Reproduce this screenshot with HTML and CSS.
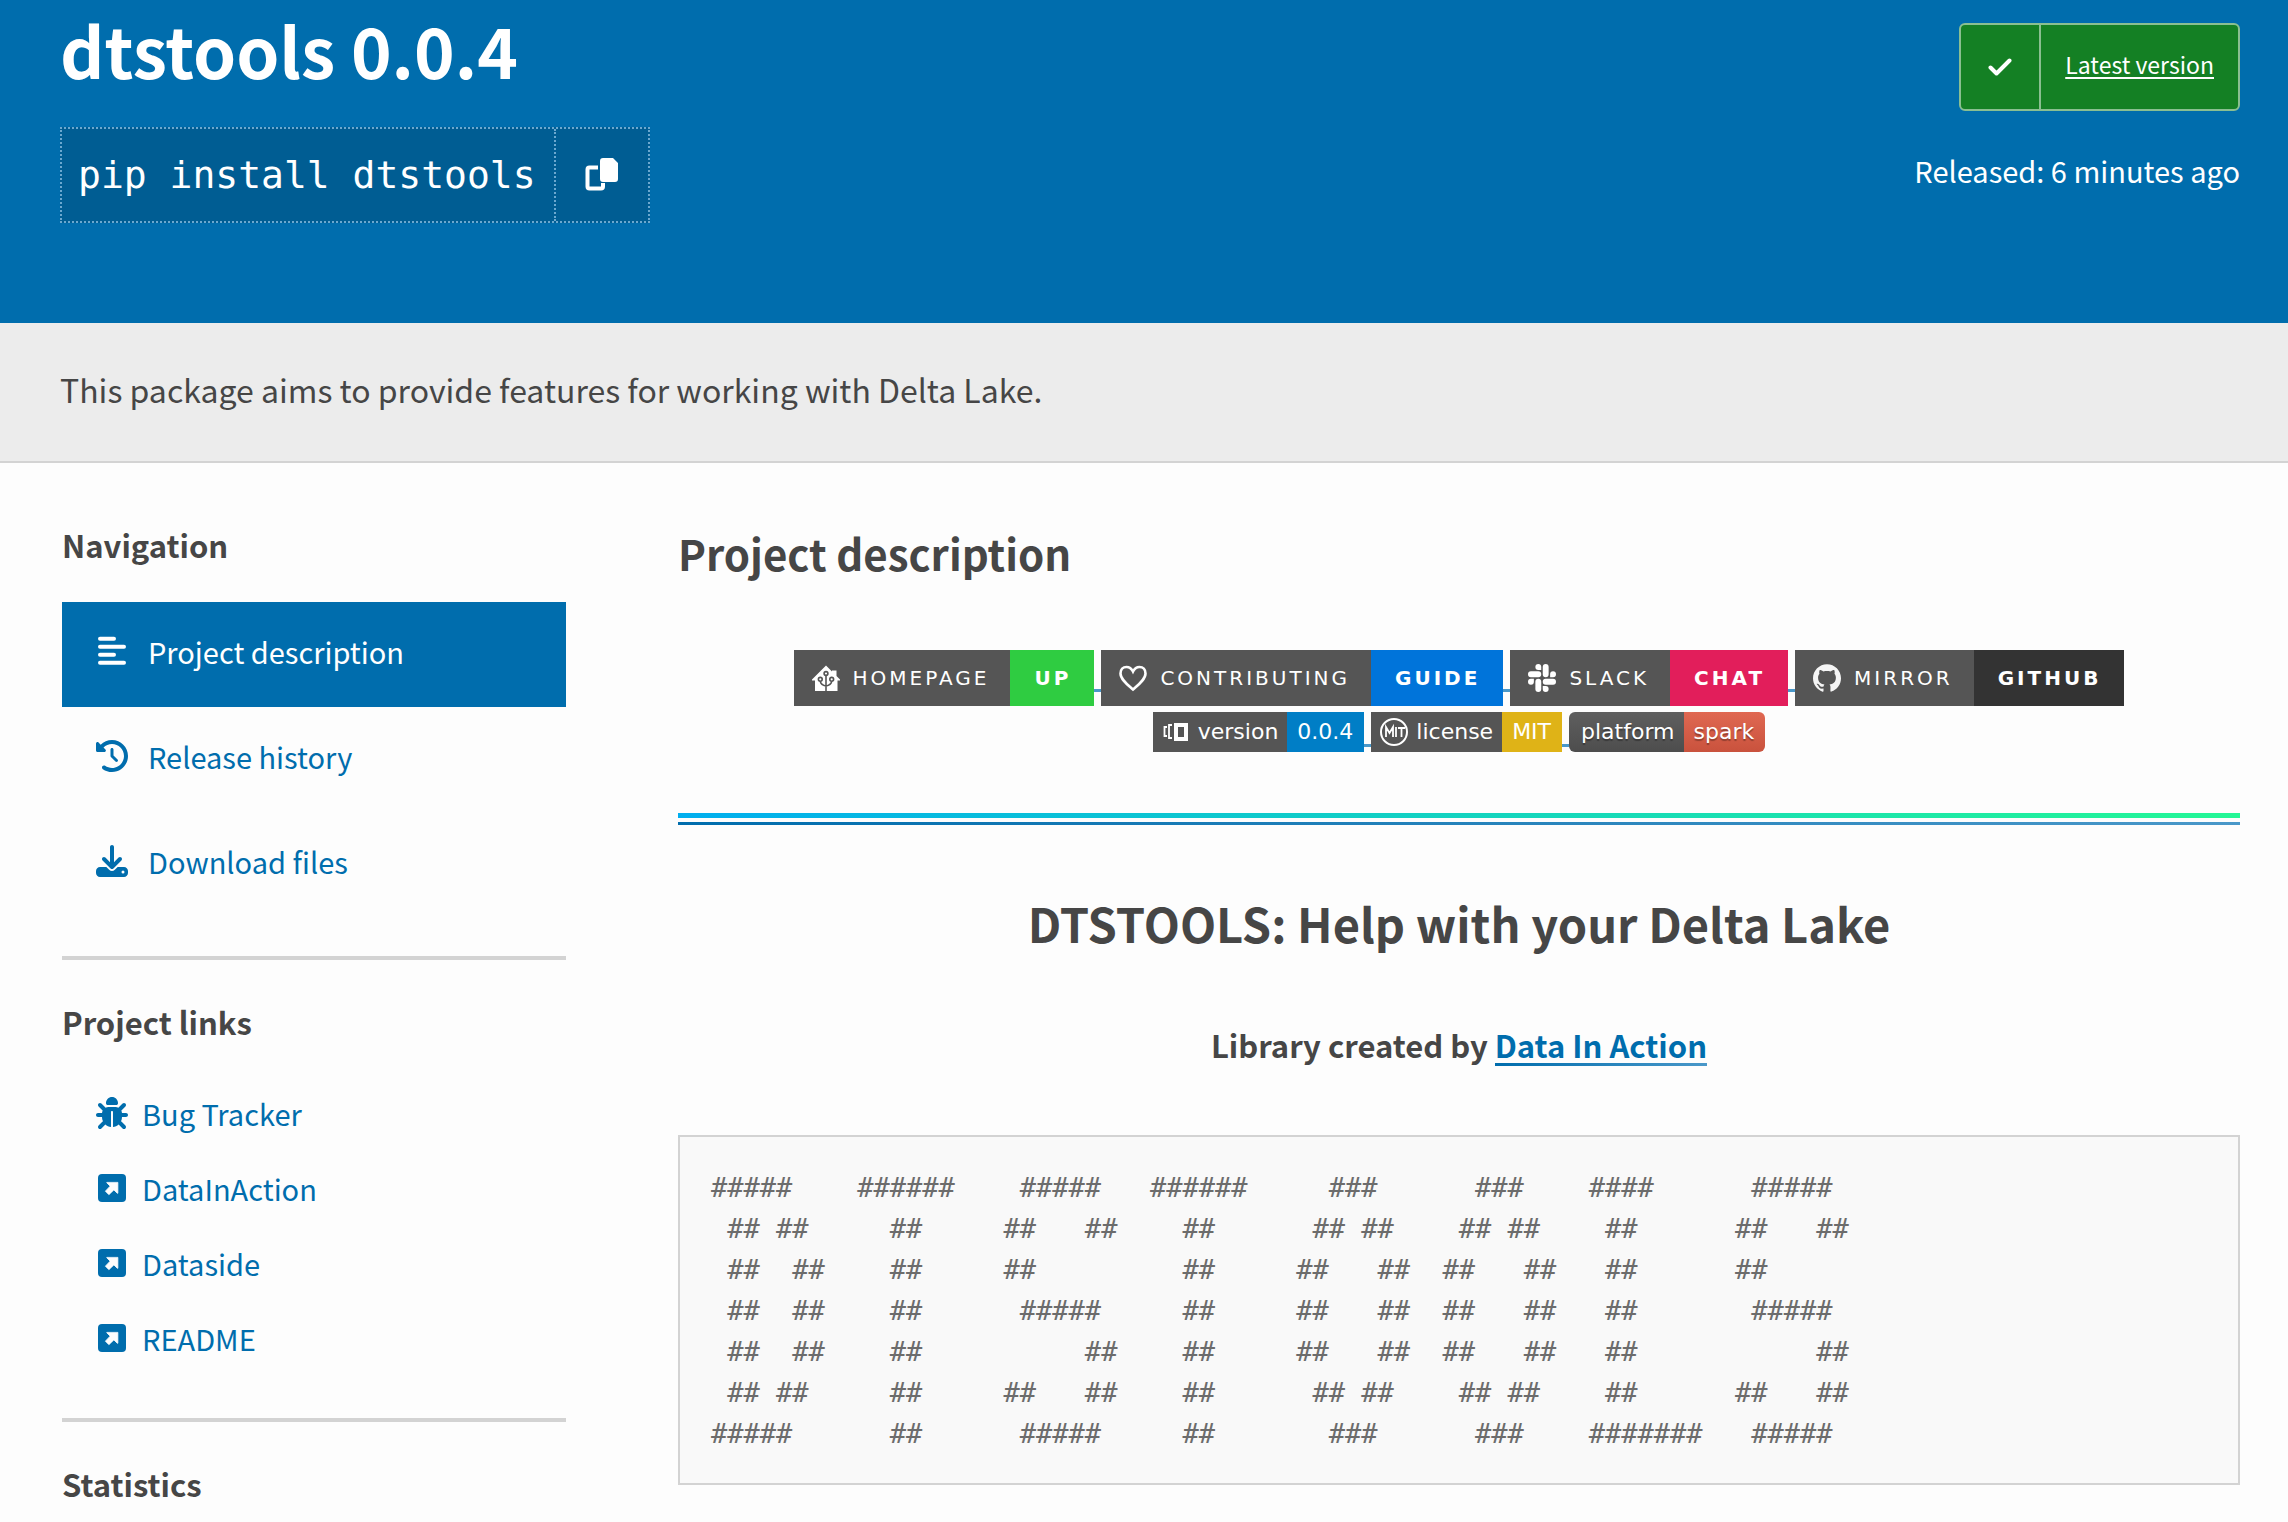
FILE: index.html
```html
<!DOCTYPE html>
<html lang="en">
<head>
    <meta charset="UTF-8">
    <meta name="viewport" content="width=device-width, initial-scale=1.0">
    <title>dtstools · PyPI</title>
    <link rel="stylesheet" href="styles.css">
</head>
<body>
    <header class="package-header">
        <div class="package-left">
            <h1 class="package-name">dtstools 0.0.4</h1>
            <div class="pip">
                <span class="pip-command">pip install dtstools</span>
                <button type="button" class="copy-btn" aria-label="Copy PIP instructions">
                    <svg class="icon-copy" viewBox="0 0 34 34">
                        <path d="M13 10.500H4.500Q2.500 10.500 2.500 12.500V29.500Q2.500 31.500 4.500 31.500H16Q18 31.500 18 29.500V26" fill="none" stroke="currentColor" stroke-width="4"/>
                        <path d="M17 1H28L33 6V22Q33 25 30 25H18Q15 25 15 22V4Q15 1 18 1Z" fill="currentColor"/>
                    </svg>
                </button>
            </div>
        </div>
        <div class="package-right">
            <a class="status" href="#">
                <span class="status-icon">
                    <svg class="icon-check" viewBox="0 0 24 18"><path d="M2.500 9.500L8.500 15.500L21.500 2.500" fill="none" stroke="currentColor" stroke-width="4" stroke-linecap="round" stroke-linejoin="round"/></svg>
                </span>
                <span class="status-text">Latest version</span>
            </a>
            <p class="released">Released: 6 minutes ago</p>
        </div>
    </header>

    <div class="summary">
        <p>This package aims to provide features for working with Delta Lake.</p>
    </div>

    <div class="container">
        <aside class="sidebar">
            <section class="side-section">
                <h2 class="side-title">Navigation</h2>
                <nav class="tabs">
                    <a class="tab active" href="#">
                        <svg class="icon" viewBox="0 0 512 512" fill="currentColor"><rect x="32" y="28" width="288" height="64" rx="32"/><rect x="32" y="156" width="448" height="64" rx="32"/><rect x="32" y="284" width="288" height="64" rx="32"/><rect x="32" y="412" width="448" height="64" rx="32"/></svg>
                        Project description
                    </a>
                    <a class="tab" href="#">
                        <svg class="icon" viewBox="0 0 512 512" fill="currentColor"><path d="M75 75L41 41C25.900 25.900 0 36.600 0 57.900V168c0 13.300 10.700 24 24 24H134.100c21.400 0 32.100-25.900 17-41l-30.800-30.800C155 85.500 203 64 256 64c106 0 192 86 192 192s-86 192-192 192c-40.800 0-78.600-12.700-109.700-34.400c-14.500-10.100-34.400-6.600-44.600 7.900s-6.600 34.400 7.900 44.600C151.200 495 201.700 512 256 512c141.400 0 256-114.600 256-256S397.400 0 256 0C185.300 0 121.300 28.700 75 75zm181 53c-13.300 0-24 10.700-24 24V256c0 6.400 2.500 12.500 7 17l72 72c9.400 9.400 24.600 9.400 33.900 0s9.400-24.600 0-33.900l-65-65V152c0-13.300-10.700-24-24-24z"/></svg>
                        Release history
                    </a>
                    <a class="tab" href="#">
                        <svg class="icon" viewBox="0 0 512 512" fill="currentColor"><path fill-rule="evenodd" d="M288 32c0-17.700-14.300-32-32-32s-32 14.300-32 32V274.700l-73.400-73.400c-12.500-12.500-32.800-12.500-45.300 0s-12.500 32.800 0 45.300l128 128c12.500 12.500 32.800 12.500 45.300 0l128-128c12.500-12.500 12.500-32.800 0-45.300s-32.800-12.500-45.300 0L288 274.700V32zM64 352c-35.300 0-64 28.700-64 64v32c0 35.300 28.700 64 64 64H448c35.300 0 64-28.700 64-64V416c0-35.300-28.700-64-64-64H346.500l-45.300 45.300c-25 25-65.500 25-90.500 0L165.500 352H64zm368 56a24 24 0 1 1 0 48 24 24 0 1 1 0-48z"/></svg>
                        Download files
                    </a>
                </nav>
            </section>
            <section class="side-section">
                <h2 class="side-title">Project links</h2>
                <ul class="links">
                    <li><a href="#">
                        <svg class="icon" viewBox="0 0 512 512" fill="currentColor"><path d="M256 0c53 0 96 43 96 96v3.600c0 15.700-12.700 28.400-28.400 28.400H188.400c-15.700 0-28.400-12.700-28.400-28.400V96c0-53 43-96 96-96zM41.400 105.400c12.500-12.500 32.800-12.500 45.300 0l64 64c.7 .7 1.300 1.400 1.900 2.100c14.200-7.300 30.400-11.400 47.500-11.400H312c17.100 0 33.200 4.100 47.500 11.400c.6-.7 1.200-1.400 1.900-2.100l64-64c12.500-12.500 32.800-12.500 45.300 0s12.500 32.800 0 45.300l-64 64c-.7 .7-1.400 1.300-2.100 1.900c6.200 12 10.100 25.300 11.100 39.500H480c17.700 0 32 14.300 32 32s-14.300 32-32 32H416c0 24.600-5.500 47.800-15.400 68.600c2.200 1.300 4.200 2.900 6 4.800l64 64c12.500 12.500 12.500 32.800 0 45.300s-32.800 12.500-45.300 0l-63.100-63.100c-24.500 21.800-55.800 36.200-90.300 39.600V240c0-8.800-7.200-16-16-16s-16 7.200-16 16V479.200c-34.500-3.400-65.800-17.800-90.300-39.600L86.600 502.600c-12.500 12.500-32.800 12.500-45.300 0s-12.500-32.800 0-45.300l64-64c1.900-1.900 3.900-3.400 6-4.800C101.500 367.800 96 344.600 96 320H32c-17.700 0-32-14.300-32-32s14.300-32 32-32H96.300c1.100-14.100 5-27.500 11.100-39.500c-.7-.6-1.400-1.200-2.100-1.900l-64-64c-12.500-12.500-12.500-32.800 0-45.300z"/></svg>
                        Bug Tracker</a></li>
                    <li><a href="#">
                        <svg class="icon" viewBox="0 0 512 512"><rect x="32" y="32" width="448" height="448" rx="64" fill="currentColor"/><path d="M350 166V340L340 340L286 286L206 362L150 306L226 226L172 172V166Z" fill="#fdfdfd" stroke="#fdfdfd" stroke-width="12" stroke-linejoin="round"/></svg>
                        DataInAction</a></li>
                    <li><a href="#">
                        <svg class="icon" viewBox="0 0 512 512"><rect x="32" y="32" width="448" height="448" rx="64" fill="currentColor"/><path d="M350 166V340L340 340L286 286L206 362L150 306L226 226L172 172V166Z" fill="#fdfdfd" stroke="#fdfdfd" stroke-width="12" stroke-linejoin="round"/></svg>
                        Dataside</a></li>
                    <li><a href="#">
                        <svg class="icon" viewBox="0 0 512 512"><rect x="32" y="32" width="448" height="448" rx="64" fill="currentColor"/><path d="M350 166V340L340 340L286 286L206 362L150 306L226 226L172 172V166Z" fill="#fdfdfd" stroke="#fdfdfd" stroke-width="12" stroke-linejoin="round"/></svg>
                        README</a></li>
                </ul>
            </section>
            <section class="side-section">
                <h2 class="side-title">Statistics</h2>
            </section>
        </aside>

        <main class="content">
            <h2 class="page-title">Project description</h2>

            <div class="badges">
                <div class="badge-row">
                    <a class="badge large" href="#">
                        <span class="badge-label">
                            <svg class="badge-icon" viewBox="0 0 28 28"><path d="M14 1.500L20 7.500V6.500H24.500V12L28 15.500V16.500H25.500V27H3V16.500H0V15.500Z" fill="#fff"/><g fill="none" stroke="#555" stroke-width="1.600"><circle cx="14" cy="9.500" r="1.900"/><circle cx="8.300" cy="15.300" r="1.900"/><circle cx="19.700" cy="15.300" r="1.900"/><path d="M14 11.500V27M8.300 17.300Q9 21 14 22M19.700 17.300Q19 21 14 22"/></g></svg>
                            HOMEPAGE
                        </span>
                        <span class="badge-value green">UP</span>
                    </a>
                    <a class="badge large" href="#">
                        <span class="badge-label">
                            <svg class="badge-icon" viewBox="0 0 28 28"><path d="M14 25.500C9 21 1.500 15.500 1.500 9.500C1.500 5.500 4 3 7.500 3C10.500 3 12.500 4.500 14 7.500C15.500 4.500 17.500 3 20.500 3C24 3 26.500 5.500 26.500 9.500C26.500 15.500 19 21 14 25.500Z" fill="none" stroke="#fff" stroke-width="2.600"/></svg>
                            CONTRIBUTING
                        </span>
                        <span class="badge-value blue">GUIDE</span>
                    </a>
                    <a class="badge large" href="#">
                        <span class="badge-label">
                            <svg class="badge-icon" viewBox="0 0 24 24" fill="#fff"><path d="M5.042 15.165a2.528 2.528 0 0 1-2.520 2.523A2.528 2.528 0 0 1 0 15.165a2.527 2.527 0 0 1 2.522-2.520h2.520v2.520zM6.313 15.165a2.527 2.527 0 0 1 2.521-2.520 2.527 2.527 0 0 1 2.521 2.520v6.313A2.528 2.528 0 0 1 8.834 24a2.528 2.528 0 0 1-2.521-2.522v-6.313zM8.834 5.042a2.528 2.528 0 0 1-2.521-2.520A2.528 2.528 0 0 1 8.834 0a2.528 2.528 0 0 1 2.521 2.522v2.520H8.834zM8.834 6.313a2.528 2.528 0 0 1 2.521 2.521 2.528 2.528 0 0 1-2.521 2.521H2.522A2.528 2.528 0 0 1 0 8.834a2.528 2.528 0 0 1 2.522-2.521h6.312zM18.956 8.834a2.528 2.528 0 0 1 2.522-2.521A2.528 2.528 0 0 1 24 8.834a2.528 2.528 0 0 1-2.522 2.521h-2.522V8.834zM17.688 8.834a2.528 2.528 0 0 1-2.523 2.521 2.527 2.527 0 0 1-2.520-2.521V2.522A2.527 2.527 0 0 1 15.165 0a2.528 2.528 0 0 1 2.523 2.522v6.312zM15.165 18.956a2.528 2.528 0 0 1 2.523 2.522A2.528 2.528 0 0 1 15.165 24a2.527 2.527 0 0 1-2.520-2.522v-2.522h2.520zM15.165 17.688a2.527 2.527 0 0 1-2.520-2.523 2.526 2.526 0 0 1 2.520-2.520h6.313A2.527 2.527 0 0 1 24 15.165a2.528 2.528 0 0 1-2.522 2.523h-6.313z"/></svg>
                            SLACK
                        </span>
                        <span class="badge-value pink">CHAT</span>
                    </a>
                    <a class="badge large" href="#">
                        <span class="badge-label">
                            <svg class="badge-icon" viewBox="0 0 24 24" fill="#f5f5f5"><path d="M12 .297c-6.630 0-12 5.373-12 12 0 5.303 3.438 9.800 8.205 11.385.6.113.82-.258.82-.577 0-.285-.01-1.040-.015-2.040-3.338.724-4.042-1.610-4.042-1.610C4.422 18.070 3.633 17.700 3.633 17.700c-1.087-.744.084-.729.084-.729 1.205.084 1.838 1.236 1.838 1.236 1.070 1.835 2.809 1.305 3.495.998.108-.776.417-1.305.76-1.605-2.665-.3-5.466-1.332-5.466-5.930 0-1.310.465-2.380 1.235-3.220-.135-.303-.54-1.523.105-3.176 0 0 1.005-.322 3.300 1.230.96-.267 1.980-.399 3-.405 1.020.006 2.040.138 3 .405 2.280-1.552 3.285-1.230 3.285-1.230.645 1.653.24 2.873.12 3.176.765.84 1.230 1.910 1.230 3.220 0 4.610-2.805 5.625-5.475 5.920.42.36.81 1.096.81 2.220 0 1.606-.015 2.896-.015 3.286 0 .315.21.69.825.57C20.565 22.092 24 17.592 24 12.297c0-6.627-5.373-12-12-12"/></svg>
                            MIRROR
                        </span>
                        <span class="badge-value dark">GITHUB</span>
                    </a>
                </div>
                <div class="badge-row">
                    <a class="badge" href="#">
                        <span class="badge-label">
                            <svg class="badge-icon" viewBox="0 0 28 28" fill="none" stroke="#fff"><rect x="14" y="7" width="10" height="14" stroke-width="4"/><path d="M10 7H7V20H10M5 9H2.500V18H5" stroke-width="1.800"/></svg>
                            version
                        </span>
                        <span class="badge-value azure">0.0.4</span>
                    </a>
                    <a class="badge" href="#">
                        <span class="badge-label">
                            <svg class="badge-icon" viewBox="0 0 28 28" fill="none" stroke="#fff"><circle cx="14" cy="14" r="13" stroke-width="2"/><path d="M6 19V9L9.500 15L13 9V19M16 9V19M18 10H25M21.500 10V19" stroke-width="1.800"/></svg>
                            license
                        </span>
                        <span class="badge-value yellow">MIT</span>
                    </a>
                    <a class="badge rounded" href="#">
                        <span class="badge-label">platform</span>
                        <span class="badge-value orange">spark</span>
                    </a>
                </div>
            </div>

            <a class="divider" href="#" aria-label="divider"></a>

            <h1 class="doc-title">DTSTOOLS: Help with your Delta Lake</h1>
            <h3 class="doc-author">Library created by <a href="#">Data In Action</a></h3>

<pre class="banner">
#####    ######    #####   ######     ###      ###    ####      #####
 ## ##     ##     ##   ##    ##      ## ##    ## ##    ##      ##   ##
 ##  ##    ##     ##         ##     ##   ##  ##   ##   ##      ##
 ##  ##    ##      #####     ##     ##   ##  ##   ##   ##       #####
 ##  ##    ##          ##    ##     ##   ##  ##   ##   ##           ##
 ## ##     ##     ##   ##    ##      ## ##    ## ##    ##      ##   ##
#####      ##      #####     ##       ###      ###    #######   #####
</pre>
        </main>
    </div>
</body>
</html>
```
FILE: styles.css
```css
* {
    box-sizing: border-box;
}

body {
    margin: 0;
    background-color: #fdfdfd;
    color: #464646;
    font-family: "Noto Sans CJK SC", "Open Sans", sans-serif;
    font-size: 29px;
    line-height: 44px;
}

h1, h2, h3, p, ul, pre {
    margin: 0;
    padding: 0;
}

a {
    color: #006dad;
    text-decoration: none;
}

/* header */
.package-header {
    display: flex;
    justify-content: space-between;
    min-height: 323px;
    padding: 5px 48px 0 60px;
    background-color: #006dad;
    color: #fff;
}

.package-name {
    font-size: 69px;
    font-weight: 600;
    line-height: 88px;
    margin-bottom: 34px;
}

.pip {
    display: inline-flex;
    height: 96px;
    background-color: #005d93;
    border: 2px dotted #6ba8cf;
}

.pip-command {
    display: flex;
    align-items: center;
    padding: 0 18px 0 16px;
    font-family: "DejaVu Sans Mono", monospace;
    font-size: 38px;
}

.copy-btn {
    width: 94px;
    padding: 0;
    border: none;
    border-left: 2px dotted #6ba8cf;
    background: none;
    color: #fff;
    cursor: pointer;
}

.icon-copy {
    width: 34px;
    height: 34px;
}

.package-right {
    display: flex;
    flex-direction: column;
    align-items: flex-end;
    padding-top: 18px;
}

.status {
    display: flex;
    height: 88px;
    margin-bottom: 37px;
    background-color: #148024;
    border: 2px solid #8abf91;
    border-radius: 6px;
    color: #fff;
    font-size: 23px;
}

.status-icon {
    display: flex;
    align-items: center;
    justify-content: center;
    width: 80px;
    border-right: 2px solid #8abf91;
}

.icon-check {
    width: 24px;
    height: 18px;
}

.status-text {
    padding: 17px 24px;
    text-decoration: underline;
    text-underline-offset: 3px;
    text-decoration-thickness: 2px;
}

/* summary */
.summary {
    padding: 44px 60px 50px;
    background-color: #ececec;
    border-bottom: 2px solid #d3d3d3;
    font-size: 32px;
}

/* layout */
.container {
    display: grid;
    grid-template-columns: 504px 1fr;
    gap: 112px;
    padding: 60px 48px 0 62px;
}

.side-section + .side-section {
    margin-top: 39px;
    padding-top: 40px;
    border-top: 4px solid #d3d3d3;
}

.side-title {
    font-size: 31px;
    font-weight: 600;
    line-height: 44px;
}

.tabs {
    margin-top: 35px;
}

.tab {
    display: flex;
    align-items: center;
    gap: 20px;
    height: 105px;
    padding: 0 34px 7px;
}

.tab.active {
    background-color: #006dad;
    color: #fff;
}

.icon {
    width: 32px;
    height: 32px;
    flex-shrink: 0;
}

.links {
    list-style: none;
    margin-top: 31px;
    padding-bottom: 4px;
}

.links a {
    display: flex;
    align-items: center;
    gap: 14px;
    height: 75px;
    padding: 0 34px;
}

.page-title {
    font-size: 42px;
    font-weight: 600;
    line-height: 60px;
}

/* badges */
.badges {
    display: flex;
    flex-direction: column;
    align-items: center;
    gap: 6px;
    margin-top: 67px;
    font-family: "DejaVu Sans", sans-serif;
}

.badge-row {
    display: flex;
}

.badge {
    display: flex;
    position: relative;
    height: 40px;
    color: #fff;
    font-size: 22px;
}

.badge + .badge {
    margin-left: 7px;
}

/* the link underline shows between two badges */
.badge + .badge::before {
    content: "";
    position: absolute;
    left: -7px;
    bottom: 5px;
    width: 7px;
    height: 3px;
    background-color: #4a98c9;
}

.badge-label,
.badge-value {
    display: flex;
    align-items: center;
    padding: 0 9px;
}

.badge-label {
    gap: 8px;
    background-color: #555;
}

.badge-value {
    padding: 0 11px 0 10px;
}

.badge-icon {
    width: 28px;
    height: 28px;
}

.badge.large {
    height: 56px;
    font-size: 20px;
    letter-spacing: 3px;
}

.badge.large + .badge.large::before {
    bottom: 14px;
}

.large .badge-label {
    gap: 13px;
    padding: 0 21px 0 18px;
}

.large .badge-value {
    padding: 0 23px 0 24px;
    font-weight: bold;
}

.green {
    background-color: #2fcc41;
}

.blue {
    background-color: #0074da;
}

.pink {
    background-color: #e21e5b;
}

.dark {
    background-color: #333;
}

.azure {
    background-color: #007ec6;
}

.yellow {
    background-color: #dfb317;
}

.rounded {
    text-shadow: 0 2px 1px rgba(1, 1, 1, 0.3);
}

.rounded .badge-label {
    padding-left: 12px;
    background-image: linear-gradient(#5f5f5f, #4d4d4d);
    border-radius: 6px 0 0 6px;
}

.rounded .orange {
    background-image: linear-gradient(#e06852, #c9523d);
    border-radius: 0 6px 6px 0;
}

/* divider image inside a link */
.divider {
    display: block;
    height: 25px;
    margin-top: 48px;
    padding-top: 13px;
    border-bottom: 3px solid;
    border-image: linear-gradient(to right, #006dad, #4a98c9) 1;
}

.divider::before {
    content: "";
    display: block;
    height: 5px;
    background-image: linear-gradient(to right, #00aeef, #13d3c0 50%, #24f795);
}

.doc-title {
    margin-top: 62px;
    font-size: 47px;
    font-weight: 600;
    line-height: 72px;
    text-align: center;
}

.doc-author {
    margin-top: 60px;
    font-size: 31px;
    font-weight: 600;
    line-height: 52px;
    text-align: center;
}

.doc-author a {
    background: linear-gradient(to right, #006dad, #4a98c9) no-repeat 0 calc(100% - 1px) / 100% 3px;
}

.banner {
    margin-top: 64px;
    padding: 30px 31px 29px;
    background-color: #f9f9f9;
    border: 2px solid #d3d3d3;
    color: #6c6c6c;
    font-family: "DejaVu Sans Mono", monospace;
    font-size: 27px;
    line-height: 41px;
}
```
